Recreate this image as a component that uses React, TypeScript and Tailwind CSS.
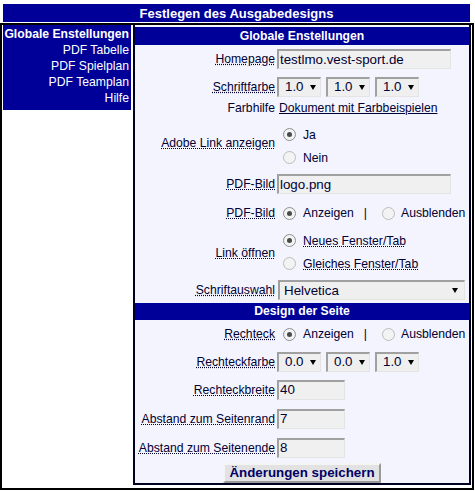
import React from "react";

const F = "font-['Liberation_Sans',Arial,sans-serif]";
const LBL = "w-[140px] shrink-0 text-right text-[12.2px] leading-[14px]";
const DOT = "underline decoration-dotted";

function Tri() {
  return (
    <svg width="6" height="5" viewBox="0 0 6 5" className="shrink-0">
      <polygon points="0,0 6,0 3,5" fill="#000" />
    </svg>
  );
}

function Sel({ v }: { v: string }) {
  return (
    <div className="flex h-[20px] w-[44px] items-center border-t-2 border-l-2 border-r border-b border-t-[#a0a0a0] border-l-[#a0a0a0] border-r-[#e4e4e4] border-b-[#e4e4e4] bg-[#efefef] pl-[6px] text-[13.33px] leading-none">
      <span>{v}</span>
      <span className="ml-[6px]">
        <Tri />
      </span>
    </div>
  );
}

function TInput({ v, w }: { v: string; w: string }) {
  return (
    <div
      className={
        "flex h-[20px] items-center border-t-2 border-l-2 border-r border-b border-t-[#a0a0a0] border-l-[#a0a0a0] border-r-[#e4e4e4] border-b-[#e4e4e4] bg-[#f0f0f0] pl-[1px] text-[13.33px] leading-none " +
        w
      }
    >
      {v}
    </div>
  );
}

function Radio({ on }: { on?: boolean }) {
  return (
    <span
      className={
        "flex h-[13px] w-[13px] shrink-0 items-center justify-center rounded-full border bg-[#f3f3f3] " +
        (on ? "border-[#8f8f8f]" : "border-[#bcbcbc]")
      }
    >
      {on ? <span className="h-[5px] w-[5px] rounded-full bg-[#4a4a4a]" /> : null}
    </span>
  );
}

function TwoRadio({ a }: { a: boolean }) {
  return (
    <div className="flex items-center whitespace-nowrap text-[12.2px] leading-[14px]">
      <span className="ml-[6px]">
        <Radio on={a} />
      </span>
      <span className="ml-[7px]">Anzeigen</span>
      <span className="ml-[10px]">|</span>
      <span className="ml-[15px]">
        <Radio on={!a} />
      </span>
      <span className="ml-[6px]">Ausblenden</span>
    </div>
  );
}

export default function App() {
  return (
    <div className={"w-[475px] h-[491px] bg-white text-[#000033] " + F}>
      <div className="ml-[3px] pt-[4px]">
        <div className="flex h-[18px] w-[467px] items-center justify-center bg-[#000099] text-[13px] font-bold leading-none text-white">
          Festlegen des Ausgabedesigns
        </div>
      </div>
      <div className="mt-[1px] flex w-[474px] items-start border-2 border-black pb-[3px] pl-[1px] pr-[1px]">
        <div className="flex w-[128px] flex-col items-end bg-[#000099] pt-[1px] pb-[4px] pr-[2px] text-[12.2px] leading-[16px] text-white">
          <div className="font-bold">Globale Enstellungen</div>
          <div>PDF Tabelle</div>
          <div>PDF Spielplan</div>
          <div>PDF Teamplan</div>
          <div>Hilfe</div>
        </div>
        <div className="ml-[2px] flex w-[338px] flex-col overflow-hidden border-x-2 border-b-2 border-[#000022] bg-[#f4f4fe] pt-[2px]">
          <div className="flex h-[18px] items-center justify-center bg-[#000099] text-[12.2px] font-bold leading-none text-white">
            Globale Enstellungen
          </div>
          <div className="flex h-[28px] items-center">
            <div className={LBL}>
              <span className={DOT}>Homepage</span>
            </div>
            <div className="ml-[2px]">
              <TInput v="testlmo.vest-sport.de" w="w-[174px]" />
            </div>
          </div>
          <div className="flex h-[27px] items-center">
            <div className={LBL}>
              <span className={DOT}>Schriftfarbe</span>
            </div>
            <div className="ml-[2px] flex gap-[5px]">
              <Sel v="1.0" />
              <Sel v="1.0" />
              <Sel v="1.0" />
            </div>
          </div>
          <div className="flex h-[16px] items-center">
            <div className={LBL}>Farbhilfe</div>
            <div className="ml-[4px] text-[12.2px] leading-[14px] underline">Dokument mit Farbbeispielen</div>
          </div>
          <div className="flex h-[54px] items-center">
            <div className={LBL}>
              <span className={DOT}>Adobe Link anzeigen</span>
            </div>
            <div className="ml-[2px] flex h-[54px] flex-col pt-[7px] text-[12.2px] leading-[14px]">
              <div className="flex h-[23px] items-center">
                <span className="ml-[6px]">
                  <Radio on />
                </span>
                <span className="ml-[7px]">Ja</span>
              </div>
              <div className="flex h-[23px] items-center">
                <span className="ml-[6px]">
                  <Radio />
                </span>
                <span className="ml-[7px]">Nein</span>
              </div>
            </div>
          </div>
          <div className="flex h-[28px] items-center">
            <div className={LBL}>
              <span className={DOT}>PDF-Bild</span>
            </div>
            <div className="ml-[2px]">
              <TInput v="logo.png" w="w-[174px]" />
            </div>
          </div>
          <div className="flex h-[30px] items-center">
            <div className={LBL}>
              <span className={DOT}>PDF-Bild</span>
            </div>
            <div className="ml-[2px]">
              <TwoRadio a />
            </div>
          </div>
          <div className="flex h-[49px] items-center">
            <div className={LBL}>
              <span className={DOT}>Link öffnen</span>
            </div>
            <div className="ml-[2px] flex h-[49px] flex-col pt-[1px] text-[12.2px] leading-[14px]">
              <div className="flex h-[23px] items-center">
                <span className="ml-[6px]">
                  <Radio on />
                </span>
                <span className={"ml-[7px] " + DOT}>Neues Fenster/Tab</span>
              </div>
              <div className="flex h-[23px] items-center">
                <span className="ml-[6px]">
                  <Radio />
                </span>
                <span className={"ml-[7px] " + DOT}>Gleiches Fenster/Tab</span>
              </div>
            </div>
          </div>
          <div className="flex h-[26px] items-center">
            <div className={LBL}>
              <span className={DOT}>Schriftauswahl</span>
            </div>
            <div className="ml-[3px] flex h-[20px] w-[187px] items-center justify-between border-t-2 border-l-2 border-r border-b border-t-[#a0a0a0] border-l-[#a0a0a0] border-r-[#e4e4e4] border-b-[#e4e4e4] bg-[#efefef] pl-[4px] pr-[6px] text-[13.33px] leading-none">
              <span>Helvetica</span>
              <Tri />
            </div>
          </div>
          <div className="flex h-[17px] items-center justify-center bg-[#000099] text-[12.2px] font-bold leading-none text-white">
            Design der Seite
          </div>
          <div className="flex h-[28px] items-center">
            <div className={LBL}>
              <span className={DOT}>Rechteck</span>
            </div>
            <div className="ml-[2px]">
              <TwoRadio a />
            </div>
          </div>
          <div className="flex h-[27px] items-center">
            <div className={LBL}>
              <span className={DOT}>Rechteckfarbe</span>
            </div>
            <div className="ml-[2px] flex gap-[5px]">
              <Sel v="0.0" />
              <Sel v="0.0" />
              <Sel v="1.0" />
            </div>
          </div>
          <div className="flex h-[29px] items-center">
            <div className={LBL}>
              <span className={DOT}>Rechteckbreite</span>
            </div>
            <div className="ml-[2px]">
              <TInput v="40" w="w-[68px]" />
            </div>
          </div>
          <div className="flex h-[29px] items-center">
            <div className={LBL}>
              <span className={DOT}>Abstand zum Seitenrand</span>
            </div>
            <div className="ml-[2px]">
              <TInput v="7" w="w-[68px]" />
            </div>
          </div>
          <div className="flex h-[29px] items-center">
            <div className={LBL}>
              <span className={DOT}>Abstand zum Seitenende</span>
            </div>
            <div className="ml-[2px]">
              <TInput v="8" w="w-[68px]" />
            </div>
          </div>
          <div className="flex h-[21px] items-center justify-center">
            <div className="flex h-[20px] items-center border-2 border-t-[#f4f4f4] border-l-[#f4f4f4] border-r-[#9a9a9a] border-b-[#9a9a9a] bg-[#e2e2e2] px-[4px] text-[13.33px] font-bold leading-none text-[#000066]">
              Änderungen speichern
            </div>
          </div>
        </div>
      </div>
    </div>
  );
}
